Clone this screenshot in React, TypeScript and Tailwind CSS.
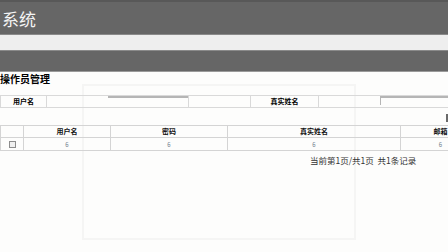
import React from "react";

const font = { fontFamily: '"Noto Sans CJK SC", "Liberation Sans", sans-serif' };

const dataCols = [
  { label: "", w: "w-[23px]" },
  { label: "用户名", w: "w-[87px]" },
  { label: "密码", w: "w-[117px]" },
  { label: "真实姓名", w: "w-[173px]" },
  { label: "邮箱", w: "w-[80px]" },
];

export default function App() {
  return (
    <div className="relative h-[252px] w-[448px] overflow-hidden bg-[#fdfdfc]" style={font}>
      {/* faint watermark frame behind content */}
      <div className="pointer-events-none absolute left-[82px] top-[84px] h-[156px] w-[274px] border-2 border-[#f5f5f4]" />

      <div className="flex h-[34px] items-center border-t-2 border-[#585858] bg-[#666666]">
        <span className="ml-[2px] text-[17px] leading-none text-[#f4f4f4]">系统</span>
      </div>
      <div className="h-[17px] border-y border-[#8a8a8a] bg-[#eeeeee]" />
      <div className="h-[21px] border-b border-[#9a9a9a] bg-[#666666]" />

      <div className="relative">
        <h1 className="mt-[1px] text-[10px] font-bold leading-[12px] text-black">操作员管理</h1>

        {/* search form */}
        <table className="mt-[10px] w-[520px] table-fixed border-collapse text-[7px]">
          <tbody>
            <tr className="h-[12px]">
              <td className="w-[46px] border border-[#d9d9d9] text-center font-bold">用户名</td>
              <td className="w-[142px] border border-[#d9d9d9] p-0 align-top">
                <div className="ml-[61px] h-[9px] w-[81px] border-t-2 border-r border-[#b5b5b5]" />
              </td>
              <td className="w-[62px] border border-[#d9d9d9]" />
              <td className="w-[68px] border border-[#d9d9d9] text-center font-bold">真实姓名</td>
              <td className="border border-[#d9d9d9] p-0 align-top">
                <div className="ml-[61px] h-[9px] w-[140px] border-t-2 border-l border-[#b5b5b5]" />
              </td>
            </tr>
          </tbody>
        </table>

        <div className="flex h-[17px] items-center justify-end">
          <span className="mt-[2px] h-[8px] w-[2px] bg-[#6a6a6a]" />
        </div>

        {/* list */}
        <table className="w-[480px] table-fixed border-collapse text-[7px]">
          <thead>
            <tr className="h-[12px]">
              {dataCols.map((c) => (
                <th key={c.label || "chk"} className={`${c.w} border border-[#d4d4d4] text-center font-bold text-[#111]`}>
                  {c.label}
                </th>
              ))}
            </tr>
          </thead>
          <tbody>
            <tr className="h-[13px]">
              <td className="border border-[#d4d4d4] text-center">
                <span className="inline-block h-[7px] w-[7px] border border-[#8c8c8c] bg-[#f0f0f0] align-middle" />
              </td>
              {["6", "6", "6", "6"].map((v, i) => (
                <td key={i} className="border border-[#d4d4d4] text-center text-[6px] text-[#6d7c8a]">
                  {v}
                </td>
              ))}
            </tr>
          </tbody>
        </table>

        <div className="mt-[3px] pl-[310px] text-[8.5px] leading-[12px] whitespace-nowrap text-[#333]">
          当前第1页/共1页&nbsp;&nbsp;共1条记录
        </div>
      </div>
    </div>
  );
}
